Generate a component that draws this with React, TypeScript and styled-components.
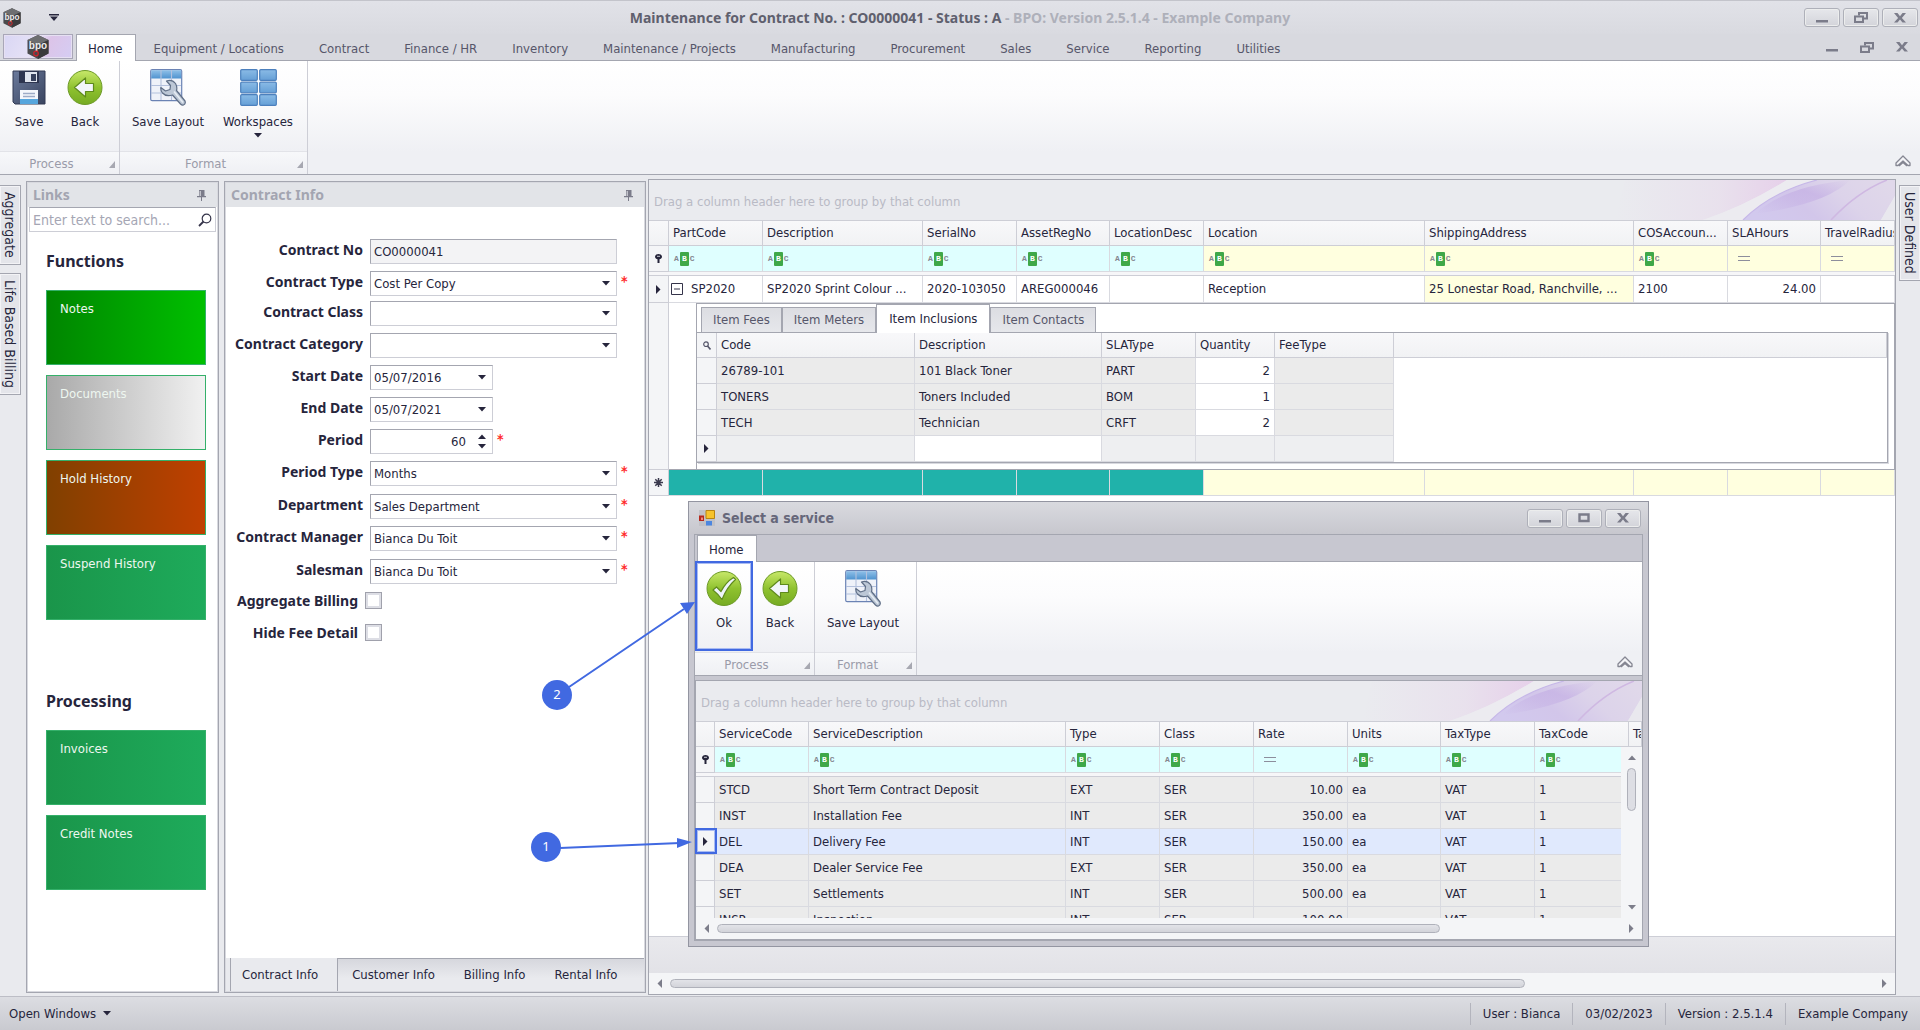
import React from 'react';
import styled, { createGlobalStyle, css } from 'styled-components';

const ui = '"DejaVu Sans Condensed", "Noto Sans", sans-serif';
const strong = '"Noto Sans", "DejaVu Sans Condensed", sans-serif';
const ink = '#26253c';
const line = '#a4a6b0';
const soft = '#cdced6';
const cyan = '#dfffff';
const yellow = '#ffffdf';
const mark = '#4169e1';

const Global = createGlobalStyle`
  *, *::before, *::after { box-sizing: border-box; }
  html, body { margin: 0; padding: 0; }
  body { font: 13px/18px ${ui}; color: ${ink}; background: #e9eaee; overflow: hidden; }
  button, input, select { font: inherit; color: inherit; margin: 0; padding: 0; border: 0; background: none; border-radius: 0; }
  button { cursor: pointer; }
  svg { display: block; }
`;

const Shell = styled.div`
  position: relative;
  display: flex;
  flex-direction: column;
  height: 100vh;
  overflow: hidden;
`;

/* ---------- title bar and ribbon ---------- */

const TitleBar = styled.header`
  display: grid;
  grid-template-columns: 1fr auto 1fr;
  align-items: center;
  height: 34px;
  border-top: 1px solid #c3c4cb;
  background: linear-gradient(#e1e2e8, #d9dae0);
`;
const QuickAccess = styled.div`
  display: flex;
  align-items: center;
  gap: 28px;
  padding-left: 3px;
`;
const Caption = styled.h1`
  margin: 0;
  font: bold 14px/20px ${strong};
  color: #5f606e;
  white-space: nowrap;
`;
const Muted = styled.span`
  color: #aeb0ba;
`;
const WindowButtons = styled.div`
  display: flex;
  justify-content: flex-end;
  gap: 3px;
  padding-right: 2px;
`;
const WindowButton = styled.button`
  display: grid;
  place-items: center;
  width: 36px;
  height: 19px;
  border: 1px solid #aeb0b9;
  border-radius: 3px;
  background: linear-gradient(#e6e7eb, #d3d4da);
  box-shadow: inset 0 0 0 1px #eceded;
`;
const TabRow = styled.nav`
  display: flex;
  align-items: flex-end;
  height: 27px;
  padding-left: 3px;
  background: #d8d9df;
  border-bottom: 1px solid ${line};
`;
const AppButton = styled.button`
  display: grid;
  place-items: center;
  width: 70px;
  height: 25px;
  margin: 0 3px 1px 0;
  border: 1px solid #a9a7b8;
  box-shadow: inset 0 0 0 1px #e6e0f2;
  background: linear-gradient(120deg, #d9d6f4, #e6e2f6 45%, #dcc4e8 60%, #d5cdf3);
`;
const RibbonTab = styled.button<{ $on?: boolean }>`
  height: 26px;
  padding: 3px 17px 0 18px;
  color: #56566a;
  white-space: nowrap;
  ${p => p.$on && css`
    height: 27px;
    margin: 0 0 -1px;
    padding: 2px 12px 0 11px;
    color: ${ink};
    background: #fff;
    border: 1px solid ${line};
    border-bottom: 0;
  `}
`;
const ChildButtons = styled.div`
  display: flex;
  margin-left: auto;
  padding: 0 1px 3px 0;
`;
const ChildButton = styled.button`
  display: grid;
  place-items: center;
  width: 35px;
  height: 20px;
`;
const RibbonBody = styled.div`
  display: flex;
  height: 114px;
  flex: none;
  background: linear-gradient(#fff, #fcfcfd 30%, #eff0f4 80%, #eff0f4);
  border-bottom: 1px solid ${line};
`;
const RibbonGroup = styled.section`
  display: flex;
  flex-direction: column;
  border-right: 1px solid ${soft};
`;
const GroupButtons = styled.div`
  display: flex;
  flex: 1;
  gap: 10px;
  padding: 8px 11px 0 6px;
`;
const BigButton = styled.button<{ $w: number }>`
  display: flex;
  flex-direction: column;
  align-items: center;
  width: ${p => p.$w}px;
  white-space: nowrap;
`;
const BigIcon = styled.span`
  display: grid;
  place-items: center;
  height: 36px;
  margin-bottom: 8px;
`;
const MoreMark = styled.span`
  margin-top: 2px;
`;
const GroupCaption = styled.div`
  display: flex;
  align-items: center;
  height: 23px;
  padding: 2px 4px 0 0;
  color: #9a9ba9;
  border-top: 1px solid #e2e3e8;
  background: linear-gradient(#f7f8fa, #eff0f4);
`;
const GroupName = styled.span`
  flex: 1;
  padding-right: 6px;
  text-align: center;
`;
const CollapseButton = styled.button`
  align-self: flex-end;
  margin: 0 9px 7px auto;
`;

/* ---------- dock area ---------- */

const Dock = styled.main`
  display: flex;
  flex: 1;
  min-height: 0;
  background: #e9eaee;
`;
const Rail = styled.div<{ $right?: boolean }>`
  display: flex;
  flex-direction: column;
  flex: none;
  align-items: ${p => (p.$right ? 'flex-end' : 'flex-start')};
  gap: 8px;
  width: ${p => (p.$right ? 24 : 26)}px;
  padding-top: 10px;
`;
const RailTab = styled.button<{ $right?: boolean }>`
  writing-mode: vertical-rl;
  width: 21px;
  padding: 6px 0;
  font-size: 14px;
  white-space: nowrap;
  border: 1px solid ${line};
  ${p => (p.$right ? 'border-right: 0;' : 'border-left: 0;')}
  background: #e4e5ea;
  box-shadow: inset 0 0 0 1px #f3f3f6;
`;
const Panel = styled.section<{ $w: number }>`
  display: flex;
  flex-direction: column;
  flex: none;
  width: ${p => p.$w}px;
  margin: 6px 5px 3px 0;
  padding: 1px;
  border: 1px solid ${line};
  background: #fff;
  box-shadow: inset 0 0 0 1px #d8d9df;
`;
const PanelHead = styled.header`
  display: flex;
  align-items: center;
  justify-content: space-between;
  height: 24px;
  padding: 0 11px 0 5px;
  background: #e2e4e8;
`;
const PanelTitle = styled.h2`
  margin: 0;
  font: bold 14px/20px ${strong};
  color: #a3a5b1;
`;
const SearchBox = styled.label`
  display: flex;
  align-items: center;
  height: 25px;
  margin: 0 1px;
  padding: 0 3px;
  border: 1px solid ${soft};
  border-top-color: ${line};
`;
const SearchInput = styled.input`
  flex: 1;
  min-width: 0;
  outline: none;
  font-size: 14px;
  &::placeholder { color: #a5a6b4; opacity: 1; }
`;
const LinkGroup = styled.section`
  display: flex;
  flex-direction: column;
  gap: 10px;
  padding: 0 11px 0 18px;
  margin-bottom: 52px;
`;
const LinkHeading = styled.h3`
  margin: 0 0 -10px;
  font: bold 16px/58px ${strong};
`;
const Tile = styled.button<{ $from: string; $to: string }>`
  display: flex;
  align-items: flex-start;
  height: 75px;
  padding: 9px 13px;
  color: #eef7f0;
  border: 1px solid #35b06a;
  background: linear-gradient(90deg, ${p => p.$from}, ${p => p.$to});
`;

/* ---------- contract form ---------- */

const Form = styled.form`
  flex: 1;
  padding: 32px 14px 0 0;
`;
const FormRow = styled.div<{ $h: number }>`
  display: flex;
  align-items: flex-start;
  height: ${p => p.$h}px;
`;
const FormLabel = styled.label<{ $check?: boolean }>`
  width: ${p => (p.$check ? 132 : 137)}px;
  margin-right: 7px;
  font: bold 14px/${p => (p.$check ? 17 : 22)}px ${strong};
  text-align: right;
  white-space: nowrap;
`;
const Field = styled.div<{ $short?: boolean; $locked?: boolean }>`
  display: flex;
  align-items: center;
  flex: ${p => (p.$short ? 'none' : 1)};
  width: ${p => (p.$short ? '123px' : 'auto')};
  height: 25px;
  padding: 0 4px 0 3px;
  border: 1px solid ${soft};
  border-top-color: ${line};
  border-left-color: ${line};
  background: ${p => (p.$locked ? '#f3f3f5' : '#fff')};
`;
const FieldInput = styled.input<{ $right?: boolean }>`
  flex: 1;
  width: 10px;
  outline: none;
  text-align: ${p => (p.$right ? 'right' : 'left')};
`;
const FieldSelect = styled.select`
  flex: 1;
  appearance: none;
  outline: none;
`;
const FieldButton = styled.button`
  padding: 0 2px;
`;
const Spinner = styled.span`
  display: flex;
  flex-direction: column;
  gap: 5px;
  margin-left: 10px;
`;
const Required = styled.span`
  width: 13px;
  padding-left: 4px;
  color: #ff2a2a;
  font: bold 14px/20px ${ui};
`;
const CheckBox = styled.input`
  appearance: none;
  width: 17px;
  height: 17px;
  border: 1px solid #a0a1ac;
  background: #fff;
  box-shadow: inset 0 0 0 2px #dddee5;
`;
const BottomTabs = styled.nav`
  display: flex;
  height: 33px;
  padding-left: 4px;
  background: #e9eaee;
`;
const BottomRest = styled.div`
  display: flex;
  flex: 1;
  border-top: 1px solid ${line};
  border-left: 1px solid ${line};
  background: linear-gradient(#d6d7dd, #e9eaee 60%);
`;
const BottomTab = styled.button<{ $on?: boolean }>`
  padding: 0 ${p => (p.$on ? 19 : 15)}px 0 ${p => (p.$on ? 11 : 14)}px;
  white-space: nowrap;
  border-left: ${p => (p.$on ? `1px solid ${line}` : 0)};
`;

/* ---------- grids ---------- */

const GridPane = styled.section`
  display: flex;
  flex-direction: column;
  flex: 1;
  min-width: 0;
  margin: 4px 0 1px -3px;
  border: 1px solid ${line};
  background: #fff;
  overflow: hidden;
`;
const GroupBar = styled.div`
  display: flex;
  justify-content: space-between;
  flex: none;
  height: 41px;
  padding-left: 5px;
  line-height: 43px;
  color: #b9bac5;
  background: #eaebef;
  border-bottom: 1px solid ${soft};
  overflow: hidden;
`;
const Table = styled.table`
  width: 100%;
  table-layout: fixed;
  border-collapse: separate;
  border-spacing: 0;
`;
const Th = styled.th`
  height: 25px;
  padding: 0 4px;
  font-weight: normal;
  text-align: left;
  white-space: nowrap;
  overflow: hidden;
  background: linear-gradient(#f8f8fa, #f1f2f4);
  border-right: 1px solid ${soft};
  border-bottom: 1px solid ${soft};
`;
const Td = styled.td<{ $bg?: string; $right?: boolean; $h?: number }>`
  height: ${p => p.$h || 26}px;
  padding: 0 4px;
  text-align: ${p => (p.$right ? 'right' : 'left')};
  white-space: nowrap;
  overflow: hidden;
  background: ${p => p.$bg || '#fff'};
  border-right: 1px solid #d9dae0;
  border-bottom: 1px solid #d9dae0;
`;
const Indicator = styled.td`
  padding: 0;
  background: #f4f5f7;
  border-right: 1px solid ${soft};
  border-bottom: 1px solid ${soft};
  & > svg { margin: 0 auto; }
`;
const Divider = styled.td`
  height: 4px;
  padding: 0;
  background: #f6f6f8;
  border-bottom: 1px solid ${soft};
`;
const CodeCell = styled.div`
  display: flex;
  align-items: center;
  gap: 8px;
  margin-left: -2px;
`;
const DetailCell = styled.td`
  height: 167px;
  padding: 0 0 0 27px;
  vertical-align: top;
  border-bottom: 1px solid ${line};
`;
const DetailBox = styled.div`
  height: 166px;
  padding-right: 6px;
  border: 1px solid ${line};
  border-bottom: 0;
`;
const DetailTabs = styled.div`
  display: flex;
  align-items: flex-end;
  height: 28px;
  padding-left: 4px;
`;
const DetailTab = styled.button<{ $on?: boolean }>`
  height: ${p => (p.$on ? 29 : 25)}px;
  padding: 0 ${p => (p.$on ? 12 : 11)}px;
  margin-bottom: ${p => (p.$on ? -1 : 0)}px;
  white-space: nowrap;
  color: ${p => (p.$on ? ink : '#56566a')};
  background: ${p => (p.$on ? '#fff' : 'linear-gradient(#dcdde2, #e6e7eb)')};
  border: 1px solid ${line};
  border-bottom: 0;
  position: relative;
`;
const DetailGrid = styled.div`
  border: 1px solid ${line};
  border-left: 0;
  box-shadow: 1px 1px 0 #d8d9df;
`;
const Abc = styled.span`
  display: flex;
  align-items: center;
  margin-left: 1px;
  font: bold 8px/14px "Liberation Mono", monospace;
  color: #85868f;
`;
const AbcMid = styled.span`
  width: 9px;
  margin: 0 1px;
  border-radius: 1px;
  text-align: center;
  color: #fff;
  background: #3fa849;
`;
const Equals = styled.span`
  display: block;
  width: 12px;
  height: 5px;
  margin-left: 6px;
  border-top: 1px solid #8d8e9c;
  border-bottom: 1px solid #8d8e9c;
`;
const Filler = styled.div`
  flex: 1;
`;
const GridFooter = styled.div`
  height: 37px;
  flex: none;
  border-top: 1px solid ${soft};
  background: linear-gradient(#e9e9ed, #e2e2e7);
`;
const HScroll = styled.div`
  display: flex;
  align-items: center;
  gap: 8px;
  flex: none;
  height: 21px;
  padding: 0 8px;
  background: #f4f5f7;
`;
const Track = styled.div`
  flex: 1;
`;
const Thumb = styled.div<{ $share: string }>`
  width: ${p => p.$share};
  height: 9px;
  border: 1px solid #afb1ba;
  border-radius: 5px;
  background: linear-gradient(#e2e3e8, #d3d4da);
`;

/* ---------- status bar ---------- */

const StatusBar = styled.footer`
  display: flex;
  align-items: center;
  height: 34px;
  flex: none;
  padding: 0 0 0 9px;
  border-top: 1px solid #bdbec6;
  background: linear-gradient(#dcdde2, #c9cad0);
`;
const OpenWindows = styled.button`
  display: flex;
  align-items: center;
  gap: 7px;
  margin-right: auto;
`;
const StatusItem = styled.span`
  padding: 2px 12px;
  border-left: 1px solid #b3b4bd;
  white-space: nowrap;
`;

/* ---------- service dialog ---------- */

const Dialog = styled.section`
  position: absolute;
  left: 688px;
  top: 501px;
  display: flex;
  flex-direction: column;
  width: 961px;
  height: 446px;
  padding: 0 5px 5px;
  border: 1px solid #9395a1;
  background: #c7c7d0;
`;
const DialogHead = styled.header`
  display: flex;
  align-items: center;
  height: 32px;
  margin: 0 -5px;
  padding: 0 5px 0 10px;
  background: linear-gradient(#d9dadf, #c7c7ce);
`;
const DialogTitle = styled.h2`
  flex: 1;
  margin: 0 0 0 7px;
  font: bold 14px/18px ${ui};
  color: #66677a;
`;
const DialogFrame = styled.div`
  display: flex;
  flex-direction: column;
  flex: 1;
  min-height: 0;
  border: 1px solid ${line};
`;
const DialogTabs = styled.nav`
  display: flex;
  align-items: flex-end;
  height: 27px;
  padding-left: 2px;
  border-bottom: 1px solid ${line};
`;
const DialogGrid = styled.div`
  display: flex;
  flex-direction: column;
  flex: 1;
  min-height: 0;
  margin-top: 4px;
  border: 1px solid ${line};
  border-right: 0;
  background: #f4f5f7;
`;
const DialogRows = styled.div`
  position: relative;
  flex: 1;
  min-height: 0;
  overflow: hidden;
`;
const VScroll = styled.div`
  position: absolute;
  top: 25px;
  right: 0;
  bottom: 0;
  display: flex;
  flex-direction: column;
  align-items: center;
  gap: 8px;
  width: 21px;
  padding: 8px 0;
  background: #f4f5f7;
`;
const VThumb = styled.div`
  width: 9px;
  height: 43px;
  margin-bottom: auto;
  border: 1px solid #afb1ba;
  border-radius: 5px;
  background: #dddee4;
`;

/* ---------- callouts ---------- */

const Arrows = styled.svg`
  position: absolute;
  left: 0;
  top: 0;
  pointer-events: none;
`;
const Ball = styled.span<{ $x: number; $y: number }>`
  position: absolute;
  left: ${p => p.$x}px;
  top: ${p => p.$y}px;
  width: 30px;
  height: 30px;
  border-radius: 50%;
  background: ${mark};
  color: #fff;
  font: 13px/29px ${strong};
  text-align: center;
`;
const Frame = styled.span<{ $x: number; $y: number; $w: number; $h: number }>`
  position: absolute;
  left: ${p => p.$x}px;
  top: ${p => p.$y}px;
  width: ${p => p.$w}px;
  height: ${p => p.$h}px;
  border: 2px solid ${mark};
  box-shadow: inset 0 0 0 1px #a9bbf2;
  pointer-events: none;
`;

/* ---------- drawings ---------- */

const Logo = ({ w, h }: { w: number; h: number }) => (
  <svg width={w} height={h} viewBox="0 0 22 24">
    <path d="M11 0 21.5 5V18.5L11 24 .5 18.5V5Z" fill="#4a4a4c" />
    <path d="M11 0 21.5 5 11 10 .5 5Z" fill="#6d6e70" />
    <path d="M11 10 21.5 5V18.5L11 24Z" fill="#3a3a3c" />
    <text x="11" y="14" textAnchor="middle" fontFamily="Liberation Sans" fontWeight="bold" fontSize="10" fill="#ececec">bpo</text>
    <circle cx="9" cy="18.500" r="2.300" fill="none" stroke="#d0222b" strokeWidth="1.200" />
  </svg>
);
const Down = ({ c = ink }: { c?: string }) => (
  <svg width="8" height="5" viewBox="0 0 8 5"><path d="M0 0H8L4 4.500Z" fill={c} /></svg>
);
const Up = ({ c = ink }: { c?: string }) => (
  <svg width="8" height="5" viewBox="0 0 8 5"><path d="M0 5H8L4 .5Z" fill={c} /></svg>
);
const Side = ({ left, c = '#7c7d8a' }: { left?: boolean; c?: string }) => (
  <svg width="5" height="9" viewBox="0 0 5 9"><path d={left ? 'M5 0V9L.5 4.500Z' : 'M0 0V9L4.500 4.500Z'} fill={c} /></svg>
);
const Min = () => <svg width="12" height="10"><path d="M0 7H12V9.500H0Z" fill="#7b7c8a" /></svg>;
const Restore = () => (
  <svg width="14" height="11" viewBox="0 0 14 11" fill="none" stroke="#7b7c8a" strokeWidth="2">
    <path d="M5 3.500V1H13V6.500H10" /><path d="M1 4.500H9V10H1Z" />
  </svg>
);
const Max = () => <svg width="12" height="10"><path d="M1.500 1.500H10.500V8H1.500Z" fill="none" stroke="#7b7c8a" strokeWidth="2.400" /></svg>;
const Close = () => <svg width="12" height="10" viewBox="0 0 12 10"><path d="M0 0H3.500L6 3.200 8.500 0H12L7.900 4.900 12 9.500H8.500L6 6.600 3.500 9.500H0L4.100 4.900Z" fill="#7b7c8a" /></svg>;
const Corner = () => <svg width="6" height="7"><path d="M6 0V7H0Z" fill="#a7a8b1" /></svg>;
const Pin = () => (
  <svg width="9" height="11" viewBox="0 0 9 11"><path d="M2 0H7.500V6H9V7.200H5V11H4V7.200H0V6H2Z" fill="#7b7c8a" /><path d="M3.200 1V6" stroke="#e2e4e8" /></svg>
);
const Chevron = () => (
  <svg width="16" height="12" viewBox="0 0 16 12"><path d="M1 8 8 1 15 8V10.500H13L8 6 3 10.500H1ZM4 11 8 7.500 12 11" fill="#f4f4f7" stroke="#858692" strokeWidth="1.300" strokeLinejoin="round" /></svg>
);
const Glass = () => (
  <svg width="14" height="14" viewBox="0 0 14 14" fill="none" stroke="#35344a"><circle cx="8.500" cy="5.500" r="4.300" strokeWidth="1.200" /><path d="M5.500 8.500 1 13" strokeWidth="1.800" /></svg>
);
const TinyGlass = () => (
  <svg width="8" height="9" viewBox="0 0 8 9" fill="none" stroke="#55566a"><circle cx="3" cy="3.200" r="2.300" strokeWidth="1.200" /><path d="M4.500 5 7.500 8.500" strokeWidth="1.600" /></svg>
);
const FilterPin = () => (
  <svg width="7" height="9" viewBox="0 0 7 9"><path d="M3.500 0C5.500 0 7 1.200 7 2.700 7 4.300 5.500 5 4.500 5.300V9H2.500V5.300C1.500 5 0 4.300 0 2.700 0 1.200 1.500 0 3.500 0Z" fill="#25243a" /><path d="M2 2.300H5" stroke="#c9cad2" /></svg>
);
const Star = () => (
  <svg width="9" height="9" viewBox="0 0 9 9" stroke="#3b3a4e" strokeWidth="1.500"><path d="M4.500 0V9M0 4.500H9M1.300 1.300 7.700 7.700M7.700 1.300 1.300 7.700" /></svg>
);
const Minus = () => (
  <svg width="12" height="12" viewBox="0 0 12 12"><path d="M.5 .5H11.500V11.500H.5ZM3 6H9" fill="none" stroke="#35344a" /></svg>
);
const Floppy = () => (
  <svg width="34" height="36" viewBox="0 0 34 36">
    <defs><linearGradient id="fl" x1="0" y1="0" x2="1" y2="1"><stop offset="0" stopColor="#6b7a9c" /><stop offset="1" stopColor="#39445f" /></linearGradient></defs>
    <path d="M1 2H33V35H3L1 33Z" fill="url(#fl)" stroke="#323b55" />
    <path d="M7 2H27V14H7Z" fill="#2d3550" />
    <path d="M13 3H25V13H13Z" fill="#dfe4ee" /><path d="M19 5H24V12H19Z" fill="#36405c" />
    <path d="M8 21H26V35H8Z" fill="#f4f7fb" /><path d="M8 30H26V35H8Z" fill="#56a6dd" />
    <path d="M11 24.500H23M11 27.500H23" stroke="#9dabc6" strokeWidth="1.300" />
  </svg>
);
const Disc = ({ children }: { children: React.ReactNode }) => (
  <svg width="36" height="36" viewBox="0 0 36 36">
    <defs><linearGradient id="gr" x1="0" y1="0" x2="0" y2="1"><stop offset="0" stopColor="#c8e86a" /><stop offset=".5" stopColor="#8fc22f" /><stop offset="1" stopColor="#76ab23" /></linearGradient></defs>
    <circle cx="18" cy="18.500" r="17" fill="url(#gr)" stroke="#6d9a28" />
    {children}
  </svg>
);
const BackIcon = () => <Disc><path d="M7.500 18.500 18.500 9V14.500H26.500V22.500H18.500V28Z" fill="#f2f6fa" stroke="#5f8a1d" strokeWidth="1.200" strokeLinejoin="round" /></Disc>;
const OkIcon = () => <Disc><path d="M7 20 10.500 17 15 21.500Q20 12 27.500 7.500L29.500 9.500Q21 17 16 29.500Q12 24 7 20Z" fill="#eef4fa" stroke="#5f8a1d" strokeWidth="1.200" strokeLinejoin="round" /></Disc>;
const LayoutIcon = () => (
  <svg width="36" height="37" viewBox="0 0 36 37">
    <defs><linearGradient id="hd" x1="0" y1="0" x2="0" y2="1"><stop offset="0" stopColor="#8fc0e8" /><stop offset="1" stopColor="#4f93cf" /></linearGradient></defs>
    <rect x=".7" y=".7" width="31" height="31" rx="1.500" fill="#eff2f9" stroke="#6b83b4" strokeWidth="1.200" />
    <path d="M1.200 1.200H31.200V9.500H1.200Z" fill="url(#hd)" />
    <path d="M11 1V31M21.500 1V31M1 16.500H31M1 24H31" stroke="#b4c1dd" strokeWidth="1.100" />
    <path d="M16.500 12Q22 10 25.500 14.500Q27.500 18 26.500 21.500L35 32Q36 35 33.500 36Q32 36.500 30.500 35L22.500 26Q16 28 12.500 24Q10.500 21.500 10.800 18.500L15.500 22 20 20.500 20.500 16.500Z" fill="#bcc7d6" stroke="#5f6e86" strokeWidth="1.200" strokeLinejoin="round" />
    <path d="M24 22.500 33 33.500" stroke="#e6ecf3" strokeWidth="1.600" />
  </svg>
);
const WorkspacesIcon = () => (
  <svg width="37" height="37" viewBox="0 0 37 37">
    <defs><linearGradient id="ws" x1="0" y1="0" x2="0" y2="1"><stop offset="0" stopColor="#8abbe6" /><stop offset="1" stopColor="#659fd6" /></linearGradient></defs>
    {[0, 12.5, 25].map(y => [0, 19].map(x => (
      <rect key={`${x}-${y}`} x={x + 0.7} y={y + 0.7} width="16.600" height="10.600" rx="1" fill="url(#ws)" stroke="#4c80bd" strokeWidth="1.200" />
    )))}
  </svg>
);
const FormIcon = () => (
  <svg width="16" height="16" viewBox="0 0 16 16">
    <path d="M0 0H16V16H0Z" fill="#c1c1c6" /><path d="M0 5.500H5V11H0Z" fill="#b6281c" /><path d="M2 7.500H4V10H2Z" fill="#ee8a7a" />
    <path d="M7 .5H15.500V8.500H7Z" fill="#f6c32c" stroke="#b98512" /><path d="M7 11H13V15.500H7Z" fill="#4c86e0" />
  </svg>
);
const Swirl = () => (
  <svg width="300" height="40" viewBox="0 0 300 40">
    <defs>
      <linearGradient id="pk" x1="0" x2="1"><stop offset="0" stopColor="#e6cfe9" stopOpacity="0" /><stop offset=".6" stopColor="#e6cfe9" stopOpacity=".35" /><stop offset="1" stopColor="#e6d0ea" /></linearGradient>
      <linearGradient id="pp" x1="0" y1=".6" x2="1" y2=".3"><stop offset="0" stopColor="#d2c9ee" /><stop offset=".35" stopColor="#d2c6ea" /><stop offset=".65" stopColor="#dcd3ea" /><stop offset="1" stopColor="#e0d8ea" /></linearGradient>
      <linearGradient id="pd" x1="0" y1="1" x2="1" y2="0"><stop offset="0" stopColor="#bda4e2" stopOpacity="0" /><stop offset=".6" stopColor="#bda4e2" stopOpacity=".5" /><stop offset="1" stopColor="#bda4e2" stopOpacity="0" /></linearGradient>
    </defs>
    <path d="M30 0H192Q150 26 108 40H20Z" fill="url(#pk)" />
    <path d="M192 0H222Q176 12 148 40H108Q150 26 192 0Z" fill="#ecebf0" />
    <path d="M148 40Q176 12 222 0H300V16L286 40Z" fill="url(#pp)" />
    <path d="M148 40Q176 12 222 0" fill="none" stroke="#c6b7e8" strokeWidth="1.200" />
    <path d="M160 34Q190 6 255 0Q232 24 160 34Z" fill="url(#pd)" />
    <path d="M236 40Q262 12 292 0" fill="none" stroke="#cfb8e2" strokeWidth="1.500" />
    <path d="M300 16 286 40H300Z" fill="#e9e8ee" />
  </svg>
);

const AbcMark = () => <Abc aria-label="contains">A<AbcMid>B</AbcMid>C</Abc>;

/* ---------- data ---------- */

const menu = ['Equipment / Locations', 'Contract', 'Finance / HR', 'Inventory', 'Maintenance / Projects', 'Manufacturing', 'Procurement', 'Sales', 'Service', 'Reporting', 'Utilities'];

type Link = [string, string, string];
const functions: Link[] = [
  ['Notes', '#008500', '#00c000'],
  ['Documents', '#a9a9a9', '#f1f1f1'],
  ['Hold History', '#804000', '#c04000'],
  ['Suspend History', '#1a954a', '#1eab5b'],
];
const processing: Link[] = [
  ['Invoices', '#1a954a', '#1eab5b'],
  ['Credit Notes', '#1a954a', '#1eab5b'],
];

type FieldSpec = { label: string; value: string; kind: 'text' | 'list' | 'date' | 'number'; must?: boolean; h: number };
const fields: FieldSpec[] = [
  { label: 'Contract No', value: 'CO0000041', kind: 'text', h: 32 },
  { label: 'Contract Type', value: 'Cost Per Copy', kind: 'list', must: true, h: 30 },
  { label: 'Contract Class', value: '', kind: 'list', h: 32 },
  { label: 'Contract Category', value: '', kind: 'list', h: 32 },
  { label: 'Start Date', value: '05/07/2016', kind: 'date', h: 32 },
  { label: 'End Date', value: '05/07/2021', kind: 'date', h: 32 },
  { label: 'Period', value: '60', kind: 'number', must: true, h: 32 },
  { label: 'Period Type', value: 'Months', kind: 'list', must: true, h: 33 },
  { label: 'Department', value: 'Sales Department', kind: 'list', must: true, h: 32 },
  { label: 'Contract Manager', value: 'Bianca Du Toit', kind: 'list', must: true, h: 33 },
  { label: 'Salesman', value: 'Bianca Du Toit', kind: 'list', must: true, h: 33 },
];

const itemCols = [
  { name: 'PartCode', w: 94, bg: cyan }, { name: 'Description', w: 160, bg: cyan }, { name: 'SerialNo', w: 94, bg: cyan },
  { name: 'AssetRegNo', w: 93, bg: cyan }, { name: 'LocationDesc', w: 94, bg: cyan }, { name: 'Location', w: 221, bg: yellow },
  { name: 'ShippingAddress', w: 209, bg: yellow }, { name: 'COSAccoun...', w: 94, bg: yellow }, { name: 'SLAHours', w: 93, bg: yellow, num: true },
  { name: 'TravelRadius', w: 0, bg: yellow, num: true },
];
const item = ['SP2020', 'SP2020 Sprint Colour ...', '2020-103050', 'AREG000046', '', 'Reception', '25 Lonestar Road, Ranchville, ...', '2100', '24.00', ''];

const inclusionCols: [string, number][] = [['Code', 198], ['Description', 187], ['SLAType', 94], ['Quantity', 79], ['FeeType', 119]];
const inclusions = [['26789-101', '101 Black Toner', 'PART', '2'], ['TONERS', 'Toners Included', 'BOM', '1'], ['TECH', 'Technician', 'CRFT', '2']];

const serviceCols: [string, number][] = [['ServiceCode', 94], ['ServiceDescription', 257], ['Type', 94], ['Class', 94], ['Rate', 94], ['Units', 93], ['TaxType', 94], ['TaxCode', 94], ['TaxRate', 0]];
const services = [
  ['STCD', 'Short Term Contract Deposit', 'EXT', 'SER', '10.00', 'ea', 'VAT', '1'],
  ['INST', 'Installation Fee', 'INT', 'SER', '350.00', 'ea', 'VAT', '1'],
  ['DEL', 'Delivery Fee', 'INT', 'SER', '150.00', 'ea', 'VAT', '1'],
  ['DEA', 'Dealer Service Fee', 'EXT', 'SER', '350.00', 'ea', 'VAT', '1'],
  ['SET', 'Settlements', 'INT', 'SER', '500.00', 'ea', 'VAT', '1'],
  ['INSP', 'Inspection', 'INT', 'SER', '100.00', '', 'VAT', '1'],
];

/* ---------- pieces ---------- */

const Group = ({ name, children }: { name: string; children: React.ReactNode }) => (
  <RibbonGroup>
    <GroupButtons>{children}</GroupButtons>
    <GroupCaption><GroupName>{name}</GroupName><Corner /></GroupCaption>
  </RibbonGroup>
);
const Action = ({ label, icon, w = 46, more }: { label: string; icon: React.ReactNode; w?: number; more?: boolean }) => (
  <BigButton $w={w}><BigIcon>{icon}</BigIcon>{label}{more && <MoreMark><Down /></MoreMark>}</BigButton>
);
const Links = ({ title, items }: { title: string; items: Link[] }) => (
  <LinkGroup>
    <LinkHeading>{title}</LinkHeading>
    {items.map(([t, a, b]) => <Tile key={t} $from={a} $to={b}>{t}</Tile>)}
  </LinkGroup>
);
const Entry = ({ f }: { f: FieldSpec }) => {
  const id = f.label.replace(/ /g, '-').toLowerCase();
  const short = f.kind === 'date' || f.kind === 'number';
  return (
    <FormRow $h={f.h}>
      <FormLabel htmlFor={id}>{f.label}</FormLabel>
      <Field $short={short} $locked={f.kind === 'text'}>
        {f.kind === 'list' ? (
          <><FieldSelect id={id} defaultValue={f.value}><option>{f.value}</option></FieldSelect><FieldButton as="span"><Down /></FieldButton></>
        ) : (
          <FieldInput id={id} defaultValue={f.value} readOnly={f.kind === 'text'} $right={f.kind === 'number'} />
        )}
        {f.kind === 'date' && <FieldButton type="button" aria-label="Pick date"><Down /></FieldButton>}
        {f.kind === 'number' && (
          <Spinner>
            <FieldButton type="button" aria-label="Increase"><Up /></FieldButton>
            <FieldButton type="button" aria-label="Decrease"><Down /></FieldButton>
          </Spinner>
        )}
      </Field>
      {(f.must || !short) && <Required>{f.must ? '*' : ''}</Required>}
    </FormRow>
  );
};

const ItemGrid = () => (
  <Table>
    <colgroup><col style={{ width: 20 }} />{itemCols.map(c => <col key={c.name} style={c.w ? { width: c.w } : undefined} />)}</colgroup>
    <thead>
      <tr><Th />{itemCols.map(c => <Th key={c.name}>{c.name}</Th>)}</tr>
    </thead>
    <tbody>
      <tr><Indicator><FilterPin /></Indicator>{itemCols.map(c => <Td key={c.name} $bg={c.bg}>{c.num ? <Equals /> : <AbcMark />}</Td>)}</tr>
      <tr><Divider colSpan={11} /></tr>
      <tr>
        <Indicator><Side c={ink} /></Indicator>
        {item.map((v, i) => (
          <Td key={i} $h={27} $right={i === 8} $bg={i === 6 ? yellow : '#fff'}>{i === 0 ? <CodeCell><Minus />{v}</CodeCell> : v}</Td>
        ))}
      </tr>
      <tr>
        <Indicator />
        <DetailCell colSpan={10}>
          <DetailBox>
            <DetailTabs>
              {['Item Fees', 'Item Meters', 'Item Inclusions', 'Item Contacts'].map(t => <DetailTab key={t} $on={t === 'Item Inclusions'}>{t}</DetailTab>)}
            </DetailTabs>
            <DetailGrid>
              <Table>
                <colgroup><col style={{ width: 20 }} />{inclusionCols.map(([n, w]) => <col key={n} style={{ width: w }} />)}<col /></colgroup>
                <thead><tr><Indicator as="th"><TinyGlass /></Indicator>{inclusionCols.map(([n]) => <Th key={n}>{n}</Th>)}<Th /></tr></thead>
                <tbody>
                  {inclusions.map(r => (
                    <tr key={r[0]}>
                      <Indicator />
                      {r.map((v, i) => <Td key={i} $bg={i === 3 ? '#fff' : '#ebebeb'} $right={i === 3}>{v}</Td>)}
                      <Td $bg="#ebebeb" />
                    </tr>
                  ))}
                  <tr><Indicator><Side c={ink} /></Indicator>{inclusionCols.map(([n], i) => <Td key={n} $bg={i === 1 ? '#fff' : '#eeeff1'} />)}</tr>
                </tbody>
              </Table>
            </DetailGrid>
          </DetailBox>
        </DetailCell>
      </tr>
      <tr><Indicator><Star /></Indicator>{itemCols.map((c, i) => <Td key={c.name} $bg={i < 5 ? '#20b2aa' : yellow} />)}</tr>
    </tbody>
  </Table>
);

const ServiceGrid = () => (
  <Table>
    <colgroup><col style={{ width: 19 }} />{serviceCols.map(([n, w]) => <col key={n} style={w ? { width: w } : undefined} />)}</colgroup>
    <thead><tr><Th />{serviceCols.map(([n]) => <Th key={n}>{n}</Th>)}</tr></thead>
    <tbody>
      <tr><Indicator><FilterPin /></Indicator>{serviceCols.map(([n], i) => <Td key={n} $bg={cyan}>{i === 4 ? <Equals /> : i < 8 ? <AbcMark /> : null}</Td>)}</tr>
      <tr><Divider colSpan={10} /></tr>
      {services.map(r => {
        const on = r[0] === 'DEL';
        return (
          <tr key={r[0]}>
            <Indicator>{on && <Side c={ink} />}</Indicator>
            {r.map((v, i) => <Td key={i} $bg={on ? '#e0e9fd' : '#ebebeb'} $right={i === 4}>{v}</Td>)}
          </tr>
        );
      })}
    </tbody>
  </Table>
);

const Scroller = ({ share }: { share: string }) => (
  <HScroll>
    <button aria-label="Scroll left"><Side left /></button>
    <Track><Thumb $share={share} /></Track>
    <button aria-label="Scroll right"><Side /></button>
  </HScroll>
);

export default function App() {
  return (
    <Shell>
      <Global />
      <TitleBar>
        <QuickAccess>
          <Logo w={18} h={20} />
          <button aria-label="Customize">
            <svg width="10" height="7" viewBox="0 0 10 7"><path d="M0 0H10V1.500H0ZM1 2.500H9L5 7Z" fill={ink} /></svg>
          </button>
        </QuickAccess>
        <Caption>Maintenance for Contract No. : CO0000041 - Status : A <Muted>- BPO: Version 2.5.1.4 - Example Company</Muted></Caption>
        <WindowButtons>
          <WindowButton aria-label="Minimize"><Min /></WindowButton>
          <WindowButton aria-label="Restore"><Restore /></WindowButton>
          <WindowButton aria-label="Close"><Close /></WindowButton>
        </WindowButtons>
      </TitleBar>
      <TabRow>
        <AppButton aria-label="Application menu"><Logo w={22} h={24} /></AppButton>
        <RibbonTab $on>Home</RibbonTab>
        {menu.map(t => <RibbonTab key={t}>{t}</RibbonTab>)}
        <ChildButtons>
          <ChildButton aria-label="Minimize child"><Min /></ChildButton>
          <ChildButton aria-label="Restore child"><Restore /></ChildButton>
          <ChildButton aria-label="Close child"><Close /></ChildButton>
        </ChildButtons>
      </TabRow>
      <RibbonBody>
        <Group name="Process">
          <Action label="Save" icon={<Floppy />} />
          <Action label="Back" icon={<BackIcon />} />
        </Group>
        <Group name="Format">
          <Action label="Save Layout" icon={<LayoutIcon />} w={84} />
          <Action label="Workspaces" icon={<WorkspacesIcon />} w={76} more />
        </Group>
        <CollapseButton aria-label="Collapse ribbon"><Chevron /></CollapseButton>
      </RibbonBody>

      <Dock>
        <Rail><RailTab>Aggregate</RailTab><RailTab>Life Based Billing</RailTab></Rail>
        <Panel $w={193}>
          <PanelHead><PanelTitle>Links</PanelTitle><Pin /></PanelHead>
          <SearchBox><SearchInput aria-label="Search links" placeholder="Enter text to search..." /><Glass /></SearchBox>
          <Links title="Functions" items={functions} />
          <Links title="Processing" items={processing} />
        </Panel>
        <Panel $w={422}>
          <PanelHead><PanelTitle>Contract Info</PanelTitle><Pin /></PanelHead>
          <Form>
            {fields.map(f => <Entry key={f.label} f={f} />)}
            <FormRow $h={32}><FormLabel $check htmlFor="aggregate">Aggregate Billing</FormLabel><CheckBox type="checkbox" id="aggregate" /></FormRow>
            <FormRow $h={32}><FormLabel $check htmlFor="hide-fee">Hide Fee Detail</FormLabel><CheckBox type="checkbox" id="hide-fee" /></FormRow>
          </Form>
          <BottomTabs>
            <BottomTab $on>Contract Info</BottomTab>
            <BottomRest>
              <BottomTab>Customer Info</BottomTab>
              <BottomTab>Billing Info</BottomTab>
              <BottomTab>Rental Info</BottomTab>
            </BottomRest>
          </BottomTabs>
        </Panel>
        <GridPane>
          <GroupBar>Drag a column header here to group by that column<Swirl /></GroupBar>
          <ItemGrid />
          <Filler />
          <GridFooter />
          <Scroller share="71%" />
        </GridPane>
        <Rail $right><RailTab $right>User Defined</RailTab></Rail>
      </Dock>

      <StatusBar>
        <OpenWindows>Open Windows <Down /></OpenWindows>
        <StatusItem>User : Bianca</StatusItem>
        <StatusItem>03/02/2023</StatusItem>
        <StatusItem>Version : 2.5.1.4</StatusItem>
        <StatusItem>Example Company</StatusItem>
      </StatusBar>

      <Dialog role="dialog" aria-label="Select a service">
        <DialogHead>
          <FormIcon />
          <DialogTitle>Select a service</DialogTitle>
          <WindowButtons>
            <WindowButton aria-label="Minimize dialog"><Min /></WindowButton>
            <WindowButton aria-label="Maximize dialog"><Max /></WindowButton>
            <WindowButton aria-label="Close dialog"><Close /></WindowButton>
          </WindowButtons>
        </DialogHead>
        <DialogFrame>
          <DialogTabs><RibbonTab $on>Home</RibbonTab></DialogTabs>
          <RibbonBody>
            <Group name="Process">
              <Action label="Ok" icon={<OkIcon />} />
              <Action label="Back" icon={<BackIcon />} />
            </Group>
            <Group name="Format"><Action label="Save Layout" icon={<LayoutIcon />} w={84} /></Group>
            <CollapseButton aria-label="Collapse dialog ribbon"><Chevron /></CollapseButton>
          </RibbonBody>
          <DialogGrid>
            <GroupBar>Drag a column header here to group by that column<Swirl /></GroupBar>
            <DialogRows>
              <ServiceGrid />
              <VScroll>
                <button aria-label="Scroll up"><Up c="#7c7d8a" /></button>
                <VThumb />
                <button aria-label="Scroll down"><Down c="#7c7d8a" /></button>
              </VScroll>
            </DialogRows>
            <Scroller share="80%" />
          </DialogGrid>
        </DialogFrame>
      </Dialog>

      <Arrows width="1920" height="1030">
        <path d="M569 687 684 609M560 848 680 843" stroke={mark} strokeWidth="2" />
        <path d="M695 602 687 614 680 603ZM692 842 677 838 677 848Z" fill={mark} />
      </Arrows>
      <Frame $x={695} $y={561} $w={58} $h={90} />
      <Frame $x={695} $y={828} $w={22} $h={26} />
      <Ball $x={542} $y={680}>2</Ball>
      <Ball $x={531} $y={832}>1</Ball>
    </Shell>
  );
}
